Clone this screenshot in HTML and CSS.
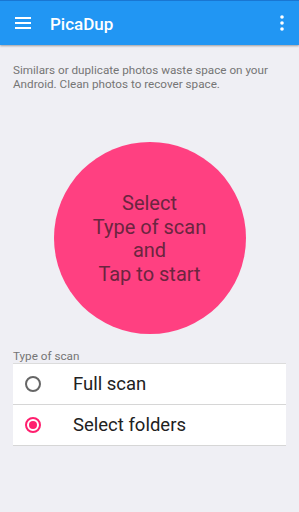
FILE: index.html
```html
<!DOCTYPE html>
<html>
<head>
<meta charset="utf-8">
<link rel="stylesheet" href="styles.css">
</head>
<body>
<div class="app">
  <header class="toolbar">
    <svg class="menu" width="16" height="12" viewBox="0 0 16 12"><rect x="0" y="0" width="16" height="2" fill="#fff"/><rect x="0" y="5" width="16" height="2" fill="#fff"/><rect x="0" y="10" width="16" height="2" fill="#fff"/></svg>
    <div class="title">PicaDup</div>
    <svg class="more" width="4" height="16" viewBox="0 0 4 16"><circle cx="2" cy="2" r="1.8" fill="#fff"/><circle cx="2" cy="8" r="1.8" fill="#fff"/><circle cx="2" cy="14" r="1.8" fill="#fff"/></svg>
  </header>
  <p class="desc">Similars or duplicate photos waste space on your Android. Clean photos to recover space.</p>
  <div class="circle-wrap">
    <div class="circle">Select<br>Type of scan<br>and<br>Tap to start</div>
  </div>
  <div class="label">Type of scan</div>
  <div class="list">
    <div class="row"><span class="radio"></span><span class="rtext">Full scan</span></div>
    <div class="row"><span class="radio on"></span><span class="rtext">Select folders</span></div>
  </div>
</div>
</body>
</html>
```
FILE: styles.css
```css
html, body { margin: 0; padding: 0; }
body { background: #efeff4; font-family: Roboto, "Noto Sans", sans-serif; width: 299px; height: 512px; overflow: hidden; }
.app { display: flex; flex-direction: column; }
.toolbar { height: 45px; background: #2196f3; border-top: 1px solid #1976d2; box-sizing: border-box; display: flex; align-items: center; padding: 0 15px; box-shadow: 0 1px 2px rgba(0,0,0,0.35); }
.menu { flex: none; }
.title { color: #fff; font-size: 17px; font-weight: 500; margin-left: 19px; flex: 1; padding-top: 2px; }
.desc { margin: 18px 13px 0; font-size: 11.7px; line-height: 14px; color: #757575; }
.circle-wrap { display: flex; justify-content: center; margin-top: 51px; }
.circle { width: 192px; height: 192px; border-radius: 50%; background: #ff4081; color: #6b2540; font-size: 20px; line-height: 23.5px; text-align: center; display: flex; align-items: center; justify-content: center; padding-top: 2px; box-sizing: border-box; }
.label { margin: 15px 13px 0; font-size: 11.7px; line-height: 14px; color: #757575; }
.list { margin: 0 13px; background: #fff; border-top: 1px solid #dcdcdc; }
.row { height: 40px; border-bottom: 1px solid #d6d6d6; display: flex; align-items: center; }
.radio { width: 16px; height: 16px; border: 2px solid #666; border-radius: 50%; box-sizing: border-box; margin-left: 12px; position: relative; }
.radio.on { border-color: #ff1f6e; }
.radio.on::after { content: ""; position: absolute; left: 2px; top: 2px; width: 8px; height: 8px; border-radius: 50%; background: #ff1f6e; }
.rtext { margin-left: 32px; font-size: 18.5px; color: #212121; }
```
